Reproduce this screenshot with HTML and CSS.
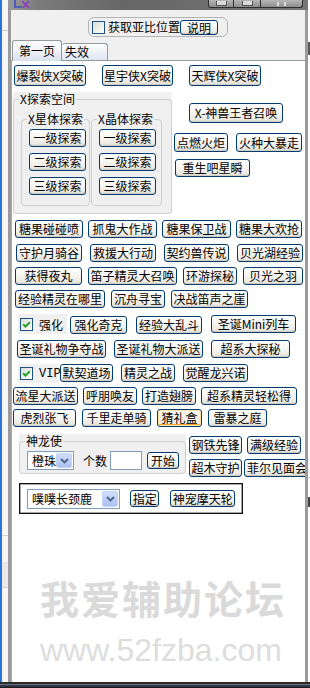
FILE: index.html
```html
<!DOCTYPE html>
<html lang="zh-CN">
<head>
<meta charset="utf-8">
<title>工具</title>
<link rel="stylesheet" href="styles.css">
</head>
<body>
<div class="screen">
  <div class="edge-left"></div>
  <div class="window">
    <div class="titlebar">
      <svg class="app-icon" width="18" height="9" viewBox="0 0 18 9">
        <path d="M2 0 L2 7 L9 7" stroke="#3a4fc8" stroke-width="1.6" fill="none"/>
        <path d="M9 1 L16 8 M16 1 L10 8" stroke="#8a3ac0" stroke-width="1.6" fill="none"/>
      </svg>
      <div class="caption">
        <span class="cap-btn cap-min"><i></i></span>
        <span class="cap-btn cap-max"><i></i></span>
        <span class="cap-btn cap-close"><i></i></span>
      </div>
    </div>
    <div class="client">
      <div class="topbar">
        <div class="locbox">
          <span class="chk"></span>
          <span class="loc-text">获取亚比位置</span>
          <button class="btn btn-help">说明</button>
        </div>
      </div>
      <div class="tabs">
        <div class="tab tab-active">第一页</div>
        <div class="tab tab-idle">失效</div>
      </div>
      <div class="panel">
        <div class="row row-1">
          <button class="btn">爆裂侠X突破</button>
          <button class="btn">星宇侠X突破</button>
          <button class="btn">天辉侠X突破</button>
        </div>

        <div class="explore">
          <div class="gbg">
            <fieldset class="group group-x">
              <legend>X探索空间</legend>
              <div class="sub">
                <fieldset class="group group-sub">
                  <legend>X星体探索</legend>
                  <button class="btn btn-lv">一级探索</button>
                  <button class="btn btn-lv">二级探索</button>
                  <button class="btn btn-lv">三级探索</button>
                </fieldset>
                <fieldset class="group group-sub group-sub2">
                  <legend>X晶体探索</legend>
                  <button class="btn btn-lv">一级探索</button>
                  <button class="btn btn-lv">二级探索</button>
                  <button class="btn btn-lv">三级探索</button>
                </fieldset>
              </div>
            </fieldset>
          </div>
          <div class="explore-side">
            <button class="btn btn-summon">X-神兽王者召唤</button>
            <div class="pair">
              <button class="btn btn-torch">点燃火炬</button>
              <button class="btn btn-fire">火种大暴走</button>
            </div>
            <button class="btn btn-reborn">重生吧星瞬</button>
          </div>
        </div>

        <div class="row row-a">
          <button class="btn">糖果碰碰喷</button>
          <button class="btn">抓鬼大作战</button>
          <button class="btn">糖果保卫战</button>
          <button class="btn">糖果大欢抢</button>
        </div>
        <div class="row row-b">
          <button class="btn">守护月骑谷</button>
          <button class="btn">救援大行动</button>
          <button class="btn">契约兽传说</button>
          <button class="btn">贝光湖经验</button>
        </div>
        <div class="row row-c">
          <button class="btn">获得夜丸</button>
          <button class="btn">笛子精灵大召唤</button>
          <button class="btn">环游探秘</button>
          <button class="btn">贝光之羽</button>
        </div>
        <div class="row row-d">
          <button class="btn">经验精灵在哪里</button>
          <button class="btn">沉舟寻宝</button>
          <button class="btn">决战笛声之崖</button>
        </div>
        <div class="row row-e">
          <label class="cb-cell"><span class="chk checked"><svg width="9" height="9" viewBox="0 0 9 9"><path d="M1.2 4.2 L3.5 6.6 L7.8 2.2" stroke="#21a121" stroke-width="2" fill="none"/></svg></span><span>强化</span></label>
          <button class="btn">强化奇克</button>
          <button class="btn">经验大乱斗</button>
          <button class="btn btn-up">圣诞Mini列车</button>
        </div>
        <div class="row row-f">
          <button class="btn">圣诞礼物争夺战</button>
          <button class="btn">圣诞礼物大派送</button>
          <button class="btn">超系大探秘</button>
        </div>
        <div class="row row-g">
          <label class="cb-cell cb-vip"><span class="chk checked"><svg width="9" height="9" viewBox="0 0 9 9"><path d="M1.2 4.2 L3.5 6.6 L7.8 2.2" stroke="#21a121" stroke-width="2" fill="none"/></svg></span><span class="vip">VIP</span></label>
          <button class="btn">默契道场</button>
          <button class="btn">精灵之战</button>
          <button class="btn">觉醒龙兴诺</button>
        </div>
        <div class="row row-h">
          <button class="btn">流星大派送</button>
          <button class="btn">呼朋唤友</button>
          <button class="btn">打造翅膀</button>
          <button class="btn">超系精灵轻松得</button>
        </div>
        <div class="row row-i">
          <button class="btn">虎烈张飞</button>
          <button class="btn">千里走单骑</button>
          <button class="btn btn-hot">猜礼盒</button>
          <button class="btn">雷暴之庭</button>
        </div>

        <div class="dragon">
          <div class="gbg gbg-dragon">
            <fieldset class="group group-dragon">
              <legend>神龙使</legend>
              <div class="dragon-row">
                <div class="combo combo-bead"><span>橙珠</span><span class="combo-arrow"><svg width="9" height="6" viewBox="0 0 9 6"><path d="M1 1 L4.5 4.5 L8 1" stroke="#4d6185" stroke-width="1.8" fill="none"/></svg></span></div>
                <span class="count-label">个数</span>
                <span class="textbox"></span>
                <button class="btn btn-start">开始</button>
              </div>
            </fieldset>
          </div>
          <div class="dragon-side">
            <div class="side-row side-row1">
              <button class="btn btn-s53">钢铁先锋</button>
              <button class="btn btn-s54">满级经验</button>
            </div>
            <div class="side-row side-row2">
              <button class="btn btn-s53">超木守护</button>
              <button class="btn btn-s66">菲尔见面会</button>
            </div>
          </div>
        </div>

        <div class="pet-box">
          <div class="combo combo-pet"><span>噗噗长颈鹿</span><span class="combo-arrow"><svg width="9" height="6" viewBox="0 0 9 6"><path d="M1 1 L4.5 4.5 L8 1" stroke="#4d6185" stroke-width="1.8" fill="none"/></svg></span></div>
          <button class="btn btn-assign">指定</button>
          <button class="btn btn-wheel">神宠摩天轮</button>
        </div>

        <div class="watermark">
          <div class="wm-cn">我爱辅助论坛</div>
          <div class="wm-url">www.52fzba.com</div>
        </div>
      </div>
    </div>
  </div>
  <div class="edge-right"></div>
</div>
<div class="taskbar"></div>
</body>
</html>
```
FILE: styles.css
```css
* { box-sizing: border-box; }

html, body {
  margin: 0;
  padding: 0;
  width: 310px;
  height: 688px;
  overflow: hidden;
  background: #f5f5f5;
  font-family: "Noto Sans CJK SC", "Noto Sans", sans-serif;
  font-size: 12px;
  color: #000;
}

.screen {
  display: flex;
  height: 682px;
}

.edge-left {
  width: 8px;
  flex: none;
  background:
    linear-gradient(90deg, #2b73d9 0 2px, transparent 2px),
    linear-gradient(180deg, transparent 30px, #cfcfcf 30px 31px, transparent 31px 535px, #d4d4d4 535px 536px, transparent 536px 562px, #e9e9e9 562px 587px, #d4d4d4 587px 588px, transparent 588px),
    #f6f6f6;
}

.edge-right {
  width: 2px;
  flex: none;
  background:
    linear-gradient(180deg, #fff 0 42px, #5a5a5a 42px 55px, #fff 55px 477px, #d8d8d8 477px 478px, #fff 478px 497px, #444 497px 507px, #fff 507px);
}

.window {
  width: 300px;
  flex: none;
  display: flex;
  flex-direction: column;
  border-left: 3px solid #9b9b9b;
  border-right: 3px solid #9b9b9b;
  background: #f0f0f0;
}

/* ---------- title bar ---------- */
.titlebar {
  height: 10px;
  flex: none;
  display: flex;
  align-items: flex-start;
  margin-left: -3px;
  margin-right: -3px;
  padding-left: 5px;
  background: linear-gradient(90deg, #9a9a9a 0, #7b7b7b 30px, #666 120px, #6e6e6e 200px, #777 100%);
}

.caption {
  display: flex;
  margin-left: auto;
  margin-right: 5px;
}

.cap-btn {
  height: 8px;
  border: 1px solid #2e2e2e;
  border-top: none;
  background: linear-gradient(#b6b6b6, #8e8e8e);
  display: flex;
  justify-content: center;
  align-items: flex-end;
}
.cap-btn + .cap-btn { border-left: none; }
.cap-min { width: 26px; border-bottom-left-radius: 3px; }
.cap-max { width: 27px; }
.cap-close { width: 42px; border-bottom-right-radius: 3px; }

.cap-btn i {
  display: block;
  width: 11px;
  height: 5px;
  margin-bottom: 1px;
  background: #d9d9d9;
  border: 1px solid #555;
  border-top: none;
}
.cap-close i {
  width: 9px;
  height: 4px;
  background: transparent;
  border: none;
  border-left: 2px solid #dcdcdc;
  border-right: 2px solid #dcdcdc;
}

/* ---------- client ---------- */
.client {
  flex: 1;
  display: flex;
  flex-direction: column;
  min-height: 0;
}

.topbar {
  height: 30px;
  flex: none;
  padding-top: 7px;
  padding-left: 77px;
}

.locbox {
  width: 140px;
  height: 20px;
  border: 1px solid #b4b4b4;
  border-radius: 6px;
  display: flex;
  align-items: center;
  padding-left: 3px;
}
.locbox > * { flex: none; }

.chk {
  width: 13px;
  height: 13px;
  flex: none;
  border: 1px solid #1c5180;
  background: linear-gradient(135deg, #dcdcd7, #fff);
  display: flex;
  align-items: center;
  justify-content: center;
}

.loc-text {
  margin-left: 3px;
  width: 72px;
  line-height: 14px;
  white-space: nowrap;
}

.btn-help {
  margin-left: 5px;
  width: 38px;
  height: 15px !important;
  line-height: 13px !important;
}

.tabs {
  height: 20px;
  flex: none;
  display: flex;
  align-items: flex-end;
  padding-left: 1px;
  position: relative;
  z-index: 2;
}

.tab {
  border: 1px solid #919b9c;
  border-bottom: none;
  border-radius: 3px 3px 0 0;
  line-height: 15px;
}

.tab-active {
  width: 50px;
  height: 21px;
  margin-bottom: -1px;
  text-align: center;
  padding-top: 2px;
  background: linear-gradient(#fdfdfe 0%, #f1f3f8 45%, #d9e0ee 100%);
}

.tab-idle {
  width: 46px;
  height: 17px;
  padding-left: 3px;
  background: linear-gradient(#fefefe 0%, #eef1f7 50%, #dfe5f2 100%);
  border-left: none;
}

.panel {
  flex: 1;
  position: relative;
  background: #fff;
  border-top: 1px solid #919b9c;
  border-left: 1px solid #a9a9a9;
  overflow: hidden;
  min-height: 0;
}

/* ---------- buttons ---------- */
.btn {
  -webkit-appearance: none;
  appearance: none;
  margin: 0;
  padding: 0;
  height: 18px;
  border: 1px solid #003c74;
  border-radius: 3px;
  background: linear-gradient(#ffffff 0%, #f7f6f2 45%, #ebe9e1 85%, #d9d5ca 100%);
  box-shadow: inset 0 -1px 0 #d2cdc0;
  font-family: "Noto Sans CJK SC", "Noto Sans", sans-serif;
  font-size: 12px;
  line-height: 16px;
  color: #000;
  text-align: center;
  white-space: nowrap;
  overflow: hidden;
}

.btn-hot {
  box-shadow: inset 0 0 0 1px #fde3a4, inset 0 -2px 0 #efa62a;
  background: linear-gradient(#fffdf6 0%, #f8f4e9 50%, #ece6d4 100%);
}

/* ---------- rows ---------- */
.row {
  display: grid;
  grid-auto-rows: 18px;
}

.row-1 {
  margin-top: 4px;
  padding-left: 2px;
  grid-template-columns: 72px 71px 72px;
  grid-auto-rows: 21px;
  column-gap: 16px;
}
.row-1 .btn { height: 21px; line-height: 19px; }

.row-a { margin-top: 6px; padding-left: 3px; grid-template-columns: 68px 69px 69px 66px; column-gap: 5px; }
.row-b { margin-top: 6px; padding-left: 4px; grid-template-columns: 66px 66px 65px 66px; column-gap: 8px; }
.row-c { margin-top: 5px; padding-left: 3px; grid-template-columns: 67px 89px 54px 60px; column-gap: 6px; }
.row-d { margin-top: 5px; padding-left: 3px; grid-template-columns: 90px 54px 77px; column-gap: 6px; }
.row-e { margin-top: 6px; padding-left: 6px; grid-template-columns: 43px 57px 66px 85px; column-gap: 9px; grid-auto-rows: 20px; align-items: end; }
.row-e .btn-up { align-self: start; margin-top: 1px; }
.row-f { margin-top: 6px; padding-left: 5px; grid-template-columns: 89px 89px 79px; column-gap: 8px; }
.row-g { margin-top: 6px; padding-left: 6px; grid-template-columns: 34px 53px 54px 65px; column-gap: 8px; grid-auto-rows: 19px; align-items: start; }
.row-h { margin-top: 4px; padding-left: 1px; grid-template-columns: 65px 54px 54px 96px; column-gap: 5px; }
.row-i { margin-top: 4px; padding-left: 1px; grid-template-columns: 63px 69px 45px 59px; column-gap: 6px; }

.cb-cell {
  background: #f0f0f0;
  display: flex;
  align-items: center;
  padding-left: 2px;
  height: 100%;
  width: calc(100% + 6px);
}
.cb-cell .chk { margin-right: 6px; }
.cb-cell .chk svg { display: block; }
.vip {
  font-family: "Liberation Mono", "DejaVu Sans Mono", monospace;
  font-size: 12px;
}

/* ---------- group boxes ---------- */
.gbg {
  background: #f0f0f0;
}

.group {
  margin: 0;
  border: 1px solid #cfcfcf;
  border-radius: 4px;
  min-width: 0;
}

.group legend {
  padding: 0 1px;
  margin-left: -2px;
  font-size: 12px;
  line-height: 14px;
  height: 14px;
}

.explore {
  margin-top: 6px;
  display: flex;
  align-items: flex-start;
}

.explore > .gbg {
  margin-left: 1px;
  width: 159px;
}

.group-x {
  width: 159px;
  padding: 6px 6px 7px 7px;
}

.sub {
  display: flex;
  gap: 1px;
}

.group-sub {
  width: 69px;
  height: 94px;
  padding: 3px 5px 0 7px;
  display: flex;
  flex-direction: column;
  gap: 6px;
}
.group-sub2 { width: 71px; }

.btn-lv { width: 57px; }

.explore-side {
  margin-left: 2px;
  display: flex;
  flex-direction: column;
  align-items: flex-start;
}

.btn-summon { margin: 11px 0 0 15px; width: 94px; height: 20px; line-height: 18px; }
.pair { margin-top: 10px; display: flex; gap: 8px; }
.btn-torch { width: 54px; height: 19px; line-height: 17px; }
.btn-fire { width: 66px; height: 19px; line-height: 17px; }
.btn-reborn { margin: 7px 0 0 1px; width: 75px; }

/* ---------- dragon ---------- */
.dragon {
  margin-top: 7px;
  display: flex;
  align-items: flex-start;
}

.gbg-dragon {
  margin-left: 7px;
  width: 167px;
}

.group-dragon {
  width: 167px;
  padding: 3px 6px 3px 7px;
}

.dragon-row {
  display: flex;
  align-items: center;
}

.combo {
  display: flex;
  align-items: stretch;
  justify-content: space-between;
  border: 1px solid #7f9db9;
  background: #fff;
  padding: 1px;
}
.combo > span:first-child {
  padding-left: 3px;
  line-height: 16px;
}
.combo-arrow {
  width: 16px;
  border-radius: 2px;
  background: linear-gradient(#d2defc, #b9ccf7 60%, #aec2f2);
  border: 1px solid #c3d3fd;
  display: flex;
  align-items: center;
  justify-content: center;
}

.combo-bead { width: 47px; height: 19px; }
.combo-bead > span:first-child { line-height: 15px; }

.count-label {
  margin-left: 9px;
  width: 24px;
  line-height: 14px;
}

.textbox {
  margin-left: 3px;
  width: 32px;
  height: 19px;
  border: 1px solid #7f9db9;
  background: #fff;
}

.btn-start {
  margin-left: 5px;
  width: 32px;
  height: 17px;
  line-height: 15px;
}

.dragon-side {
  margin-left: 3px;
  margin-top: 2px;
  display: flex;
  flex-direction: column;
  gap: 5px;
}

.side-row { display: flex; }
.side-row1 { gap: 5px; }
.side-row2 { gap: 2px; }

.btn-s53 { width: 53px; }
.btn-s54 { width: 54px; }
.btn-s66 { width: 66px; flex: none; }

/* ---------- pet box ---------- */
.pet-box {
  margin: 6px 0 0 7px;
  width: 224px;
  height: 31px;
  border: 1px solid #111;
  box-shadow: inset 0 0 0 0.5px #555;
  padding: 5px 7px;
  display: flex;
  align-items: center;
  background: #fff;
}

.combo-pet { width: 95px; height: 20px; }

.btn-assign { margin-left: 10px; width: 30px; height: 17px; line-height: 15px; }
.btn-wheel { margin-left: 11px; width: 66px; height: 17px; line-height: 15px; }

/* ---------- watermark (overlay) ---------- */
.watermark {
  position: absolute;
  left: 28px;
  top: 516px;
  pointer-events: none;
}

.wm-cn {
  font-family: "Noto Sans CJK SC", sans-serif;
  font-weight: 700;
  font-size: 39px;
  line-height: 40px;
  letter-spacing: 2px;
  color: #dadada;
}

.wm-url {
  margin-top: 17px;
  font-family: "Liberation Sans", Arial, sans-serif;
  font-size: 32px;
  line-height: 32px;
  color: #dddddd;
  white-space: nowrap;
}

/* ---------- bottom strip ---------- */
.taskbar {
  height: 6px;
  background: linear-gradient(180deg, #2a2a2a 0 2px, #6a7486 2px 3px, #2f3746 3px 5px, #1b1b1b 5px);
}
```
